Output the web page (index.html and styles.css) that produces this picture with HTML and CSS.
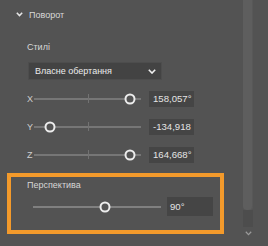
FILE: index.html
```html
<!DOCTYPE html>
<html>
<head>
<meta charset="utf-8">
<link rel="stylesheet" href="styles.css">
</head>
<body>
<div class="app">
  <div class="panel">
    <div class="header">
      <svg class="chev" width="7" height="5" viewBox="0 0 7 5"><path d="M0.8 0.8 L3.5 3.6 L6.2 0.8" fill="none" stroke="#e6e6e6" stroke-width="1.5"/></svg>
      <span class="title">Поворот</span>
    </div>
    <div class="section">
      <div class="label">Стилі</div>
      <div class="select">
        <span>Власне обертання</span>
        <svg width="8" height="5" viewBox="0 0 8 5"><path d="M0.8 0.8 L4 4 L7.2 0.8" fill="none" stroke="#f0f0f0" stroke-width="1.6"/></svg>
      </div>
      <div class="row first">
        <span class="axis">X</span>
        <div class="track"><i class="tick"></i><i class="knob" style="left:90%"></i></div>
        <div class="num">158,057°</div>
      </div>
      <div class="row">
        <span class="axis">Y</span>
        <div class="track"><i class="tick"></i><i class="knob" style="left:15%"></i></div>
        <div class="num">-134,918</div>
      </div>
      <div class="row">
        <span class="axis">Z</span>
        <div class="track"><i class="tick"></i><i class="knob" style="left:90%"></i></div>
        <div class="num">164,668°</div>
      </div>
    </div>
    <div class="persp">
      <div class="plabel">Перспектива</div>
      <div class="prow">
        <div class="track ptrack"><i class="knob" style="left:56%"></i></div>
        <div class="num pnum">90°</div>
      </div>
    </div>
  </div>
  <div class="scroll">
    <div class="thumb"></div>
    <div class="rest"></div>
    <svg class="down" width="7" height="5" viewBox="0 0 7 5"><path d="M0.8 0.8 L3.5 3.6 L6.2 0.8" fill="none" stroke="#9a9a9a" stroke-width="1.3"/></svg>
  </div>
</div>
</body>
</html>
```
FILE: styles.css
```css
html, body {
  margin: 0;
  padding: 0;
}
body {
  background: #535353;
  width: 268px;
  height: 246px;
  overflow: hidden;
  font-family: "Liberation Sans", Arial, sans-serif;
  font-size: 9px;
  color: #d6d6d6;
}
.app {
  display: flex;
  height: 246px;
}
.panel {
  width: 243px;
  display: flex;
  flex-direction: column;
}
.header {
  height: 30px;
  display: flex;
  align-items: center;
  padding-left: 16px;
}
.chev {
  margin-top: -1px;
}
.title {
  margin-left: 6px;
  font-size: 9px;
  color: #d8d8d8;
}
.section {
  padding-left: 27px;
  display: flex;
  flex-direction: column;
}
.label {
  margin-top: 11px;
  line-height: 12px;
  height: 12px;
}
.select {
  margin-top: 9px;
  margin-left: 1px;
  width: 134px;
  height: 18px;
  box-sizing: border-box;
  background: #434343;
  border: 1px solid #4d4d4d;
  display: flex;
  align-items: center;
  justify-content: space-between;
  padding: 0 5px 0 6px;
  color: #ececec;
}
.row {
  display: flex;
  align-items: center;
  height: 16px;
  margin-top: 12px;
}
.row.first {
  margin-top: 11px;
}
.axis {
  width: 7px;
  color: #cfcfcf;
  font-size: 9px;
}
.track {
  position: relative;
  width: 107px;
  height: 2px;
  background: #767676;
}
.tick {
  position: absolute;
  left: 54px;
  top: -4px;
  width: 1px;
  height: 9px;
  background: #727272;
}
.knob {
  position: absolute;
  top: 1px;
  width: 11px;
  height: 11px;
  box-sizing: border-box;
  border: 2px solid #ececec;
  border-radius: 50%;
  background: #535353;
  transform: translate(-50%, -50%);
}
.num {
  margin-left: 8px;
  width: 45px;
  height: 16px;
  box-sizing: border-box;
  background: #454545;
  padding-left: 4px;
  font-size: 9.6px;
  line-height: 16px;
  color: #e4e4e4;
  white-space: nowrap;
  overflow: hidden;
}
.persp {
  margin-top: 10px;
  margin-left: 7px;
  width: 217px;
  height: 61px;
  box-sizing: border-box;
  border: 4px solid #f39a2b;
  padding-top: 2px;
}
.plabel {
  padding-left: 16px;
  line-height: 12px;
  height: 12px;
}
.prow {
  margin-top: 6px;
  margin-left: 22px;
  display: flex;
  align-items: center;
  height: 19px;
}
.ptrack {
  width: 128px;
  background: #808080;
}
.pnum {
  margin-left: 6px;
  width: 46px;
  height: 19px;
  line-height: 19px;
  padding-left: 3px;
}
.scroll {
  width: 10px;
  display: flex;
  flex-direction: column;
  align-items: center;
}
.thumb {
  width: 10px;
  height: 210px;
  background: #5e5e5e;
  border-radius: 0 0 4px 4px;
  box-shadow: inset -1px 0 0 #585858;
}
.rest {
  width: 10px;
  height: 17px;
  background: #4d4d4d;
}
.down {
  margin-top: 4px;
}
```
